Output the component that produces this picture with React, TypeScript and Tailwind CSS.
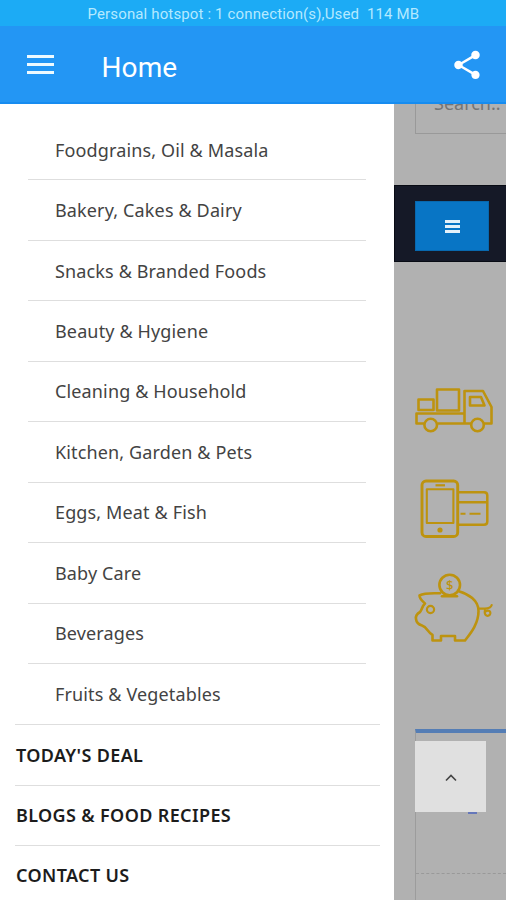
import { MdShare } from "react-icons/md";

const categories = [
  "Foodgrains, Oil & Masala",
  "Bakery, Cakes & Dairy",
  "Snacks & Branded Foods",
  "Beauty & Hygiene",
  "Cleaning & Household",
  "Kitchen, Garden & Pets",
  "Eggs, Meat & Fish",
  "Baby Care",
  "Beverages",
  "Fruits & Vegetables",
];

const links = ["TODAY'S DEAL", "BLOGS & FOOD RECIPES", "CONTACT US"];

function TruckIcon() {
  return (
    <svg
      viewBox="0 0 101 70"
      className="block h-[70px] w-[101px]"
      fill="none"
      stroke="#bd930f"
      strokeWidth="2.6"
      strokeLinejoin="round"
    >
      <rect x="13.5" y="24.5" width="15" height="10.5" />
      <rect x="32" y="14.5" width="22" height="21" />
      <path d="M19 48.5H11.5V38.5H59.5M32.5 48.5H66M59.5 48.5V16H78L86.5 32V48.5H79" />
      <path d="M65 22H76L79.5 30.5H65Z" />
      <circle cx="25.7" cy="50" r="6.3" />
      <circle cx="72.5" cy="50" r="6.3" />
    </svg>
  );
}

function PhoneIcon() {
  return (
    <svg
      viewBox="0 0 101 80"
      className="block h-[80px] w-[101px]"
      fill="none"
      stroke="#bd930f"
      strokeWidth="2.9"
      strokeLinejoin="round"
    >
      <rect x="17" y="11" width="35.7" height="55.5" rx="4" />
      <rect x="21.8" y="19.3" width="26.6" height="33.7" strokeWidth="2.1" />
      <path d="M30.5 15.3H40" strokeWidth="2.2" />
      <circle cx="35" cy="60" r="2.6" fill="#bd930f" stroke="none" />
      <path d="M54 22.3H79Q82.3 22.3 82.3 25.5V51.5Q82.3 54.8 79 54.8H54M54 32.3H82" strokeWidth="2.5" />
      <path d="M55.5 43.7H60.5M64.5 43.7H75.5" strokeWidth="1.9" />
    </svg>
  );
}

function PiggyIcon() {
  return (
    <svg
      viewBox="0 0 101 90"
      className="block h-[90px] w-[101px]"
      fill="none"
      stroke="#bd930f"
      strokeWidth="2.6"
      strokeLinejoin="round"
      strokeLinecap="round"
    >
      <path d="M35 28.3C28 28.3 20 27.5 14.5 30.5C14.5 34 18 36.5 20 38.5C17 41 17 45 15 47C11.5 49 10.5 51 11 54C11.5 58 13.5 59.5 17 60.5C22 62 23 67.5 27.5 70V75.5H36V71H50V75.5H60C64 70 73.5 60 73.5 46C73.5 35 63 29 54.5 26.5" />
      <circle cx="44.7" cy="20" r="10.3" />
      <path d="M37 31.3H52" />
      <circle cx="25.5" cy="44.5" r="3.6" strokeWidth="2.2" />
      <path d="M74 43.7H80C84 43.5 86 42.5 86.7 40M80.5 43.7C77.5 51.5 84.5 52.5 85.3 48.5C85.7 45.5 82.5 44.5 80 47" strokeWidth="2.2" />
      <text
        x="44.8"
        y="25"
        textAnchor="middle"
        fill="#bd930f"
        stroke="none"
        className="font-['Noto_Sans',sans-serif] text-[13px] font-medium"
      >
        $
      </text>
    </svg>
  );
}

function Header() {
  return (
    <header className="relative z-10">
      <div className="flex h-[26px] items-center bg-[#1cabf5] pt-[3px] pl-[87.5px] text-[15px] leading-none tracking-[0.14px] whitespace-pre text-[#b5e9ff]">
        Personal hotspot : 1 connection(s),Used{"  "}114 MB
      </div>
      <div className="flex h-[78px] items-center border-b-2 border-[#168cf0] bg-[#2396f4] pt-[2px] pr-[22px] pl-[26.5px] text-white">
        <button className="-mt-px flex w-[27px] flex-col gap-[5px]">
          <span className="h-[3px] bg-[#eefaff]" />
          <span className="h-[3px] bg-[#eefaff]" />
          <span className="h-[3px] bg-[#eefaff]" />
        </button>
        <h1 className="ml-[48px] pt-[5px] text-[28px] leading-none tracking-[0.1px]">Home</h1>
        <MdShare className="ml-auto size-[34px]" />
      </div>
    </header>
  );
}

function Drawer() {
  return (
    <nav className="w-[394px] shrink-0 bg-white pt-4 font-['Noto_Sans',sans-serif] text-[18px]">
      <ul className="px-7">
        {categories.map((name, i) => (
          <li
            key={name}
            className={`flex h-[60.45px] items-center pt-px pl-[27px] tracking-[0.14px] text-[#434343] ${
              i < categories.length - 1 ? "border-b border-[#dedede]" : ""
            }`}
          >
            {name}
          </li>
        ))}
      </ul>
      <ul className="pr-[14px] pl-[15px]">
        {links.map((name) => (
          <li
            key={name}
            className="flex h-[60.45px] items-center border-t border-[#dedede] pl-px font-semibold tracking-[0.36px] text-[#1c1c1c]"
          >
            {name}
          </li>
        ))}
      </ul>
    </nav>
  );
}

function Page() {
  return (
    <main className="flex min-w-0 grow flex-col bg-[#b1b1b1]">
      {/* the search field scrolls up under the header */}
      <div className="-mt-[14px] ml-[21px] h-[44px] shrink-0 border-b border-l border-[#999] pl-[18px] font-['Noto_Sans',sans-serif] text-[18px] leading-[27px] whitespace-nowrap text-[#747474]">
        Search..
      </div>
      <div className="mt-[51px] flex h-[77px] shrink-0 items-center border-y border-l border-[#080b14] bg-[#151927] pt-[4px] pl-5">
        <button className="flex h-[50px] w-[74px] items-center justify-center border border-[#0868ae] bg-[#0875c5]">
          <span className="flex w-[15px] flex-col gap-[2px] pt-px">
            <span className="h-[3px] bg-[#e4f1fa]" />
            <span className="h-[3px] bg-[#e4f1fa]" />
            <span className="h-[3px] bg-[#e4f1fa]" />
          </span>
        </button>
      </div>
      <div className="mt-[113px] ml-[11px] flex w-[101px] shrink-0 flex-col">
        <TruckIcon />
        <div className="mt-[25px]">
          <PhoneIcon />
        </div>
        <div className="mt-[15px]">
          <PiggyIcon />
        </div>
      </div>
      <div className="mt-[74px] ml-[21px] h-[171px] shrink-0 border-t-4 border-l border-t-[#547db5] border-l-[#9c9c9c]">
        <div className="flex h-[141px] flex-col border-b border-dashed border-[#999] pt-2">
          <button className="-ml-px flex h-[71px] w-[71px] items-center justify-center bg-[#e0e0e0]">
            <svg viewBox="0 0 12 8" className="mt-[3px] h-2 w-3" fill="none" stroke="#444" strokeWidth="1.6">
              <path d="M1 6.5L6 1.5L11 6.5" />
            </svg>
          </button>
          <span className="ml-[52px] h-[2px] w-[9px] bg-[#6577ba]" />
        </div>
      </div>
    </main>
  );
}

export default function App() {
  return (
    <div className="flex h-[900px] w-[506px] flex-col overflow-hidden font-['Roboto',sans-serif]">
      <Header />
      <div className="flex min-h-0 grow">
        <Drawer />
        <Page />
      </div>
    </div>
  );
}
